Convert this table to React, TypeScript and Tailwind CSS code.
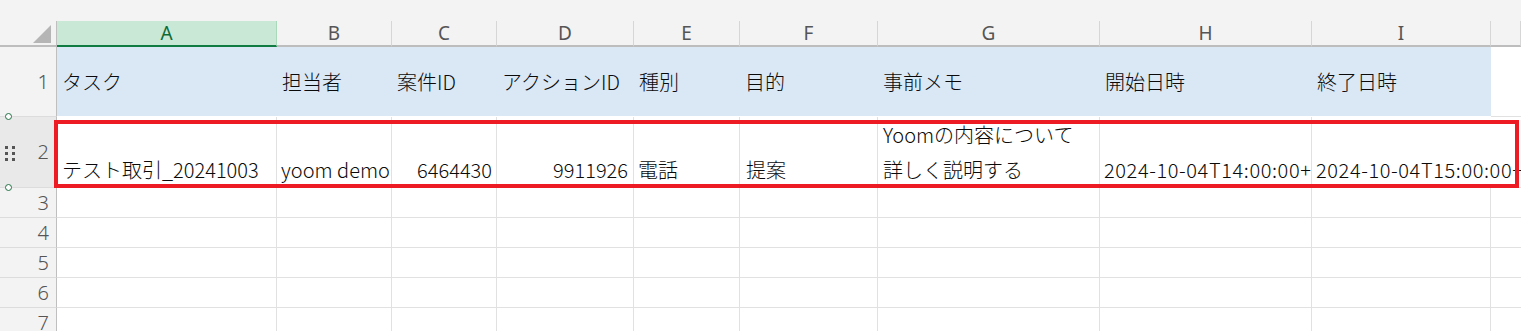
import React from "react";

const letters = ["A", "B", "C", "D", "E", "F", "G", "H", "I", ""];
const heads = ["タスク", "担当者", "案件ID", "アクションID", "種別", "目的", "事前メモ", "開始日時", "終了日時"];

function RowNum({ n, active }: { n: number; active?: boolean }) {
  return (
    <div
      className={
        "relative flex items-center justify-end pr-[7px] border-r border-r-[#bfbfbf] border-b border-b-[#dcdcdc] text-[20px] text-[#555] " +
        (active ? "bg-[#e9e9e9]" : "bg-[#f3f3f3]")
      }
      style={{ fontFamily: '"Noto Sans", sans-serif' }}
    >
      {n}
    </div>
  );
}

function Empty({ last }: { last?: boolean }) {
  return <div className={"border-b border-b-[#e1e1e1] " + (last ? "" : "border-r border-r-[#e1e1e1]")} />;
}

export default function App() {
  const font = { fontFamily: '"Noto Sans CJK JP", "Noto Sans", sans-serif' };
  return (
    <div className="relative w-[1521px] h-[331px] overflow-hidden bg-white text-[#0a0a0a] font-light" style={font}>
      <div className="h-[21px] bg-[#f3f3f3]" />
      <div className="grid grid-cols-[57px_220px_115px_105px_137px_106px_138px_222px_212px_179px_30px] grid-rows-[26px_70px_71px_30px_30px_30px_30px_30px]">
        {/* column header row */}
        <div className="relative bg-[#f3f3f3] border-r border-r-[#bfbfbf] border-b-2 border-b-[#bdbdbd]">
          <svg className="absolute left-[33px] top-[4px]" width="18" height="18" viewBox="0 0 18 18">
            <polygon points="18,0 18,18 0,18" fill="#b5b5b5" />
          </svg>
        </div>
        {letters.map((l, i) =>
          i === 0 ? (
            <div
              key={i}
              className="flex items-center justify-center bg-[#c9e8d5] border-b-2 border-b-[#107c41] border-r border-r-[#a9d8bb] text-[19px] font-normal text-[#0e6b38]"
              style={{ fontFamily: '"Noto Sans", sans-serif' }}
            >
              {l}
            </div>
          ) : (
            <div
              key={i}
              className="flex items-center justify-center bg-[#f3f3f3] border-b-2 border-b-[#bdbdbd] border-r border-r-[#d6d6d6] text-[19px] font-normal text-[#555]"
              style={{ fontFamily: '"Noto Sans", sans-serif' }}
            >
              {l}
            </div>
          )
        )}

        {/* row 1 */}
        <RowNum n={1} />
        {heads.map((h, i) => (
          <div key={i} className="flex items-center pl-[5px] bg-[#dae8f6] border-b border-b-white text-[20px] whitespace-nowrap overflow-hidden">
            {h}
          </div>
        ))}
        <div className="border-b border-b-[#e1e1e1]" />

        {/* row 2 */}
        <RowNum n={2} active />
        <div className="flex items-end pl-[5px] border-r border-r-[#e1e1e1] border-b border-b-[#e1e1e1] text-[20px] leading-[35px] whitespace-nowrap overflow-hidden">
          テスト取引_20241003
        </div>
        <div className="flex items-end pl-[4px] border-r border-r-[#e1e1e1] border-b border-b-[#e1e1e1] text-[20px] leading-[35px] whitespace-nowrap overflow-hidden">
          yoom demo
        </div>
        <div className="flex items-end justify-end pr-[4px] border-r border-r-[#e1e1e1] border-b border-b-[#e1e1e1] text-[20px] leading-[35px] whitespace-nowrap overflow-hidden">
          6464430
        </div>
        <div className="flex items-end justify-end pr-[5px] border-r border-r-[#e1e1e1] border-b border-b-[#e1e1e1] text-[20px] leading-[35px] whitespace-nowrap overflow-hidden">
          9911926
        </div>
        <div className="flex items-end pl-[4px] border-r border-r-[#e1e1e1] border-b border-b-[#e1e1e1] text-[20px] leading-[35px] whitespace-nowrap overflow-hidden">
          電話
        </div>
        <div className="flex items-end pl-[6px] border-r border-r-[#e1e1e1] border-b border-b-[#e1e1e1] text-[20px] leading-[35px] whitespace-nowrap overflow-hidden">
          提案
        </div>
        <div className="flex flex-col justify-end pl-[5px] border-r border-r-[#e1e1e1] border-b border-b-[#e1e1e1] text-[20px] leading-[35px] whitespace-nowrap overflow-hidden">
          <span>Yoomの内容について</span>
          <span>詳しく説明する</span>
        </div>
        <div className="flex items-end pl-[4px] border-r border-r-[#e1e1e1] border-b border-b-[#e1e1e1] text-[20px] leading-[35px] tracking-[0.6px] whitespace-nowrap overflow-hidden">
          2024-10-04T14:00:00+09:00
        </div>
        <div className="flex items-end pl-[4px] border-b border-b-[#e1e1e1] text-[20px] leading-[35px] tracking-[0.6px] whitespace-nowrap">
          2024-10-04T15:00:00+09:00
        </div>
        <div className="border-b border-b-[#e1e1e1]" />

        {/* rows 3-7 */}
        {[3, 4, 5, 6, 7].map((n) => (
          <React.Fragment key={n}>
            <RowNum n={n} />
            {Array.from({ length: 9 }).map((_, i) => (
              <Empty key={i} />
            ))}
            <Empty last />
          </React.Fragment>
        ))}
      </div>

      {/* drag handle on row 2 header */}
      <div className="absolute left-[5px] top-[146px] grid grid-cols-2 gap-x-[4px] gap-y-[3px]">
        {Array.from({ length: 6 }).map((_, i) => (
          <div key={i} className="w-[3px] h-[3px] bg-[#555]" />
        ))}
      </div>

      {/* selection handles */}
      <div className="absolute left-[5px] top-[113px] w-[7px] h-[7px] rounded-full border-[1.5px] border-[#217346] bg-white" />
      <div className="absolute left-[5px] top-[184px] w-[7px] h-[7px] rounded-full border-[1.5px] border-[#217346] bg-white" />

      {/* red highlight box */}
      <div className="absolute left-[54px] top-[120px] w-[1465px] h-[68px] border-4 border-[#ed1c24]" />
    </div>
  );
}
